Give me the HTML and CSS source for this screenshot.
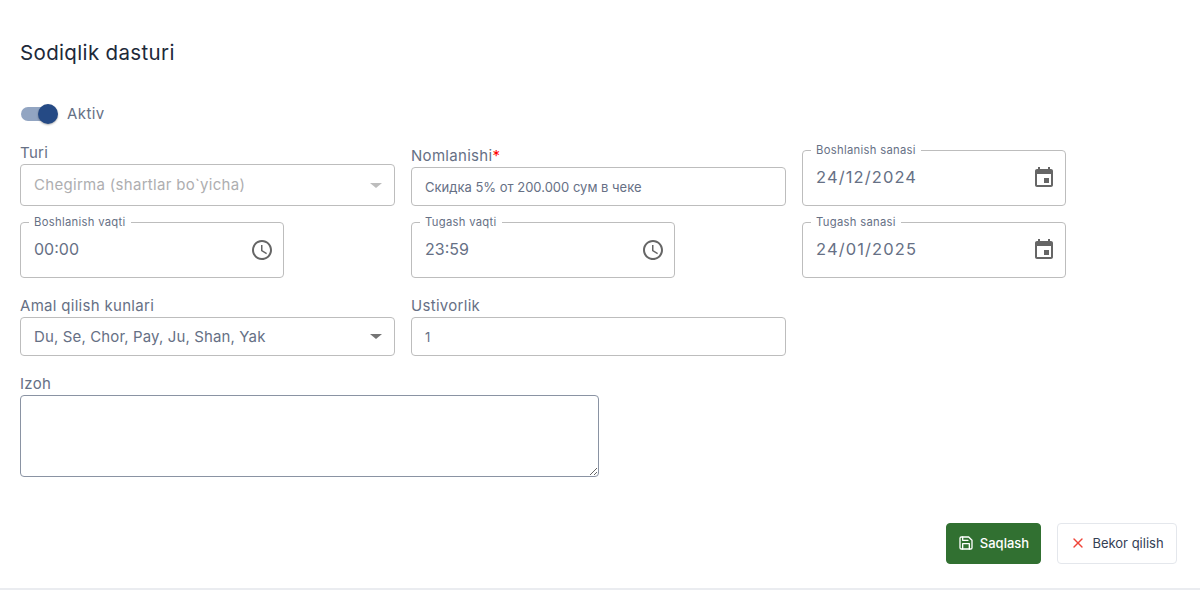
FILE: index.html
```html
<!DOCTYPE html>
<html lang="uz">
<head>
<meta charset="utf-8">
<title>Sodiqlik dasturi</title>
<link rel="stylesheet" href="styles.css">
</head>
<body>
<main class="page">
  <h1 class="title">Sodiqlik dasturi</h1>
  <div class="switch-row">
    <span class="switch"><span class="thumb"></span></span>
    <span class="switch-label">Aktiv</span>
  </div>
  <div class="row row-first">
    <div class="col-wide">
      <div class="label">Turi</div>
      <div class="box box-tall disabled"><span class="grow">Chegirma (shartlar bo`yicha)</span><span class="caret caret-light"></span></div>
    </div>
    <div class="col-wide">
      <div class="label">Nomlanishi<span class="req">*</span></div>
      <div class="box box-mid small-text"><span class="grow">Скидка 5% от 200.000 сум в чеке</span></div>
    </div>
    <div class="float-field">
      <span class="float-label">Boshlanish sanasi</span>
      <span class="grow date-value">24/12/2024</span>
      <svg class="icon" viewBox="0 0 24 24"><path d="M17 12h-5v5h5v-5zM16 1v2H8V1H6v2H5c-1.11 0-1.99.9-1.99 2L3 19c0 1.1.89 2 2 2h14c1.1 0 2-.9 2-2V5c0-1.1-.9-2-2-2h-1V1h-2zm3 18H5V8h14v11z"/></svg>
    </div>
  </div>
  <div class="row row-second">
    <div class="col-wide">
      <div class="float-field">
        <span class="float-label">Boshlanish vaqti</span>
        <span class="grow field-value">00:00</span>
        <svg class="icon" viewBox="0 0 24 24"><path d="M11.99 2C6.47 2 2 6.48 2 12s4.47 10 9.99 10C17.52 22 22 17.52 22 12S17.52 2 11.99 2zM12 20c-4.42 0-8-3.58-8-8s3.58-8 8-8 8 3.58 8 8-3.58 8-8 8zM12.5 7H11v6l5.25 3.15.75-1.23-4.5-2.67z"/></svg>
      </div>
    </div>
    <div class="col-wide">
      <div class="float-field">
        <span class="float-label">Tugash vaqti</span>
        <span class="grow field-value">23:59</span>
        <svg class="icon" viewBox="0 0 24 24"><path d="M11.99 2C6.47 2 2 6.48 2 12s4.47 10 9.99 10C17.52 22 22 17.52 22 12S17.52 2 11.99 2zM12 20c-4.42 0-8-3.58-8-8s3.58-8 8-8 8 3.58 8 8-3.58 8-8 8zM12.5 7H11v6l5.25 3.15.75-1.23-4.5-2.67z"/></svg>
      </div>
    </div>
    <div class="float-field">
      <span class="float-label">Tugash sanasi</span>
      <span class="grow date-value">24/01/2025</span>
      <svg class="icon" viewBox="0 0 24 24"><path d="M17 12h-5v5h5v-5zM16 1v2H8V1H6v2H5c-1.11 0-1.99.9-1.99 2L3 19c0 1.1.89 2 2 2h14c1.1 0 2-.9 2-2V5c0-1.1-.9-2-2-2h-1V1h-2zm3 18H5V8h14v11z"/></svg>
    </div>
  </div>
  <div class="row row-third">
    <div class="col-wide">
      <div class="label">Amal qilish kunlari</div>
      <div class="box box-mid days"><span class="grow">Du, Se, Chor, Pay, Ju, Shan, Yak</span><span class="caret"></span></div>
    </div>
    <div class="col-wide">
      <div class="label">Ustivorlik</div>
      <div class="box box-mid small-text"><span class="grow">1</span></div>
    </div>
  </div>
  <div class="note">
    <div class="label">Izoh</div>
    <textarea class="note-input"></textarea>
  </div>
  <div class="actions">
    <button class="btn btn-save" type="button">
      <svg class="btn-icon" viewBox="0 0 24 24"><path d="M19 21H5a2 2 0 0 1-2-2V5a2 2 0 0 1 2-2h11l5 5v11a2 2 0 0 1-2 2z"/><path d="M17 21v-8H7v8"/><path d="M7 3v5h8"/></svg>
      Saqlash
    </button>
    <button class="btn btn-cancel" type="button">
      <svg class="btn-icon x-icon" viewBox="0 0 24 24"><path d="M18 6 6 18"/><path d="m6 6 12 12"/></svg>
      Bekor qilish
    </button>
  </div>
</main>
<div class="bottom-line"></div>
</body>
</html>
```
FILE: styles.css
```css
* { box-sizing: border-box; }
html, body { margin: 0; padding: 0; background: #fff; }
body {
  font-family: Inter, "Noto Sans", sans-serif;
  color: #667085;
  height: 590px;
  overflow: hidden;
  display: flex;
  flex-direction: column;
}
.page { padding: 0 23px 0 20px; height: 588px; }
.title {
  margin: 0;
  padding-top: 41px;
  font-size: 20.5px;
  line-height: 24px;
  font-weight: 400;
  letter-spacing: .35px;
  color: #1d2939;
}
.switch-row { display: flex; align-items: center; gap: 9px; margin-top: 36px; height: 26px; padding-left: 1px; }
.switch { display: block; width: 37px; height: 20px; position: relative; }
.switch::before {
  content: "";
  position: absolute;
  left: 0; top: 3px;
  width: 34px; height: 14px;
  border-radius: 7px;
  background: #92a5c2;
}
.thumb {
  position: absolute;
  right: 0; top: 0;
  width: 20px; height: 20px;
  border-radius: 50%;
  background: #254a85;
  box-shadow: 0 1px 2px rgba(0,0,0,.3);
}
.switch-label { font-size: 15px; line-height: 20px; letter-spacing: .4px; }
.row { display: flex; align-items: flex-end; gap: 16px; }
.row-first { margin-top: 16px; }
.row-second { margin-top: 16px; }
.row-third { margin-top: 18px; }
.col-wide { width: 375px; flex: none; }
.label { font-size: 15px; line-height: 20px; margin-bottom: 1px; letter-spacing: .3px; }
.req { color: #f00; }
.box {
  display: flex;
  align-items: center;
  border: 1px solid #bdbdbd;
  border-radius: 4px;
  padding: 0 14px 0 13px;
  font-size: 15px;
  background: #fff;
}
.box-tall { height: 42px; padding-bottom: 2px; }
.box-mid { height: 39px; }
.disabled { color: #aeaeb0; letter-spacing: .3px; }
.days { letter-spacing: .13px; }
.small-text { font-size: 13px; }
.grow { flex: 1; min-width: 0; }
.caret {
  width: 0; height: 0;
  border-left: 6px solid transparent;
  border-right: 6px solid transparent;
  border-top: 5px solid #757575;
  margin-right: -2px;
}
.caret-light { border-top-color: #bdbdbd; margin-top: 2px; }
.float-field {
  position: relative;
  width: 264px;
  height: 56px;
  flex: none;
  display: flex;
  align-items: center;
  border: 1px solid #bdbdbd;
  border-radius: 4px;
  padding: 0 9px 0 13px;
  font-size: 16px;
}
.field-value { padding-bottom: 2px; }
.date-value { padding-bottom: 2px; font-size: 16.5px; letter-spacing: 1.1px; }
.float-label {
  position: absolute;
  left: 8px;
  top: -7px;
  padding: 0 5px;
  background: #fff;
  font-size: 11.25px;
  line-height: 12px;
  letter-spacing: .3px;
}
.icon { width: 24px; height: 24px; fill: #666; flex: none; }
.note { margin-top: 18px; }
.note-input {
  display: block;
  width: 579px;
  height: 82px;
  border: 1px solid #8a93a3;
  border-radius: 4px;
  outline: none;
  margin: 0;
  background: #fff;
}
.actions { display: flex; justify-content: flex-end; gap: 16px; margin-top: 46px; }
.btn {
  display: flex;
  align-items: center;
  height: 41px;
  border-radius: 4px;
  font-family: inherit;
  font-size: 13px;
  gap: 6px;
  cursor: pointer;
}
.btn-save {
  width: 95px;
  justify-content: center;
  background: #317031;
  border: 1px solid #317031;
  color: #fff;
  font-weight: 500;
  padding: 0 0 1px;
}
.btn-cancel {
  width: 120px;
  justify-content: center;
  background: #fff;
  border: 1px solid #e4e7ec;
  color: #344054;
  padding: 0 0 1px;
}
.btn-icon { width: 16px; height: 16px; fill: none; stroke: currentColor; stroke-width: 2; stroke-linecap: round; stroke-linejoin: round; flex: none; }
.x-icon { color: #f04438; }
.bottom-line { height: 2px; background: #eaecf0; }
```
